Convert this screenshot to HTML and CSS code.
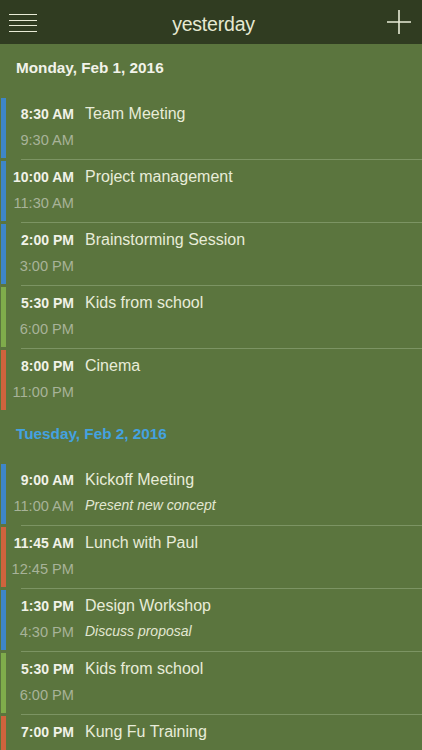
FILE: index.html
```html
<!DOCTYPE html>
<html>
<head>
<meta charset="utf-8">
<link rel="stylesheet" href="styles.css">
</head>
<body>
<div class="app">
  <header class="topbar">
    <div class="menu">
      <span></span><span></span><span></span><span></span>
    </div>
    <div class="title">yesterday</div>
    <svg class="plus" width="26" height="26" viewBox="0 0 26 26">
      <path d="M13 1V25M1 13H25" stroke="#e8ebd6" stroke-width="1.6" fill="none"/>
    </svg>
  </header>

  <section class="day">
    <h2 class="day-title">Monday, Feb 1, 2016</h2>
    <div class="event"><div class="bar blue"></div><div class="times"><div class="start">8:30 AM</div><div class="end">9:30 AM</div></div><div class="info"><div class="name">Team Meeting</div></div></div>
    <div class="event"><div class="bar blue"></div><div class="times"><div class="start">10:00 AM</div><div class="end">11:30 AM</div></div><div class="info"><div class="name">Project management</div></div></div>
    <div class="event"><div class="bar blue"></div><div class="times"><div class="start">2:00 PM</div><div class="end">3:00 PM</div></div><div class="info"><div class="name">Brainstorming Session</div></div></div>
    <div class="event"><div class="bar green"></div><div class="times"><div class="start">5:30 PM</div><div class="end">6:00 PM</div></div><div class="info"><div class="name">Kids from school</div></div></div>
    <div class="event last"><div class="bar orange"></div><div class="times"><div class="start">8:00 PM</div><div class="end">11:00 PM</div></div><div class="info"><div class="name">Cinema</div></div></div>
  </section>

  <section class="day">
    <h2 class="day-title today">Tuesday, Feb 2, 2016</h2>
    <div class="event"><div class="bar blue"></div><div class="times"><div class="start">9:00 AM</div><div class="end">11:00 AM</div></div><div class="info"><div class="name">Kickoff Meeting</div><div class="desc">Present new concept</div></div></div>
    <div class="event"><div class="bar orange"></div><div class="times"><div class="start">11:45 AM</div><div class="end">12:45 PM</div></div><div class="info"><div class="name">Lunch with Paul</div></div></div>
    <div class="event"><div class="bar blue"></div><div class="times"><div class="start">1:30 PM</div><div class="end">4:30 PM</div></div><div class="info"><div class="name">Design Workshop</div><div class="desc">Discuss proposal</div></div></div>
    <div class="event"><div class="bar green"></div><div class="times"><div class="start">5:30 PM</div><div class="end">6:00 PM</div></div><div class="info"><div class="name">Kids from school</div></div></div>
    <div class="event"><div class="bar orange"></div><div class="times"><div class="start">7:00 PM</div><div class="end">8:00 PM</div></div><div class="info"><div class="name">Kung Fu Training</div></div></div>
  </section>
</div>
</body>
</html>
```

FILE: styles.css
```css
* { box-sizing: border-box; }
html, body {
  margin: 0;
  padding: 0;
  background: #5b753e;
  font-family: "Liberation Sans", Arial, sans-serif;
}
.app {
  width: 422px;
  height: 750px;
  overflow: hidden;
  background: #5b753e;
}
.topbar {
  height: 44px;
  background: #303c21;
  display: flex;
  align-items: center;
  justify-content: space-between;
  padding: 0 10px 0 9px;
}
.menu {
  width: 28px;
  display: flex;
  flex-direction: column;
  gap: 4.2px;
  margin-top: 2px;
}
.menu span {
  display: block;
  height: 1.4px;
  background: #e8ebd6;
}
.title {
  color: #e6e9d2;
  font-size: 19.5px;
  letter-spacing: -0.2px;
  margin-left: 4px;
  margin-top: 4px;
}
.plus { display: block; }

.day-title {
  margin: 0;
  height: 54px;
  padding: 15px 0 0 16px;
  line-height: 18px;
  font-size: 15.3px;
  font-weight: bold;
  color: #f2f3ea;
}
.day-title.today { color: #44a2e0; }

.event {
  display: flex;
  height: 63px;
  position: relative;
}
.event::after {
  content: "";
  position: absolute;
  left: 21px;
  right: 0;
  top: 61px;
  height: 1px;
  background: #7c9463;
}
.event.last { height: 60px; }
.event.last::after { display: none; }

.bar {
  width: 5px;
  height: 60px;
  margin-left: 1px;
  flex: none;
}
.bar.blue { background: #3e86c8; }
.bar.green { background: #7fac4b; }
.bar.orange { background: #d0633d; }

.times {
  width: 68px;
  text-align: right;
  flex: none;
}
.start {
  font-size: 14px;
  font-weight: bold;
  color: #f1f2e8;
  margin-top: 8px;
  line-height: 16px;
}
.end {
  font-size: 14.6px;
  color: #a8b399;
  margin-top: 10px;
  line-height: 17px;
}
.info {
  margin-left: 11px;
}
.name {
  font-size: 16px;
  color: #e8ecd9;
  margin-top: 7px;
  line-height: 18px;
}
.desc {
  font-size: 14px;
  font-style: italic;
  color: #e2e7d2;
  margin-top: 8px;
  line-height: 16px;
}
```
